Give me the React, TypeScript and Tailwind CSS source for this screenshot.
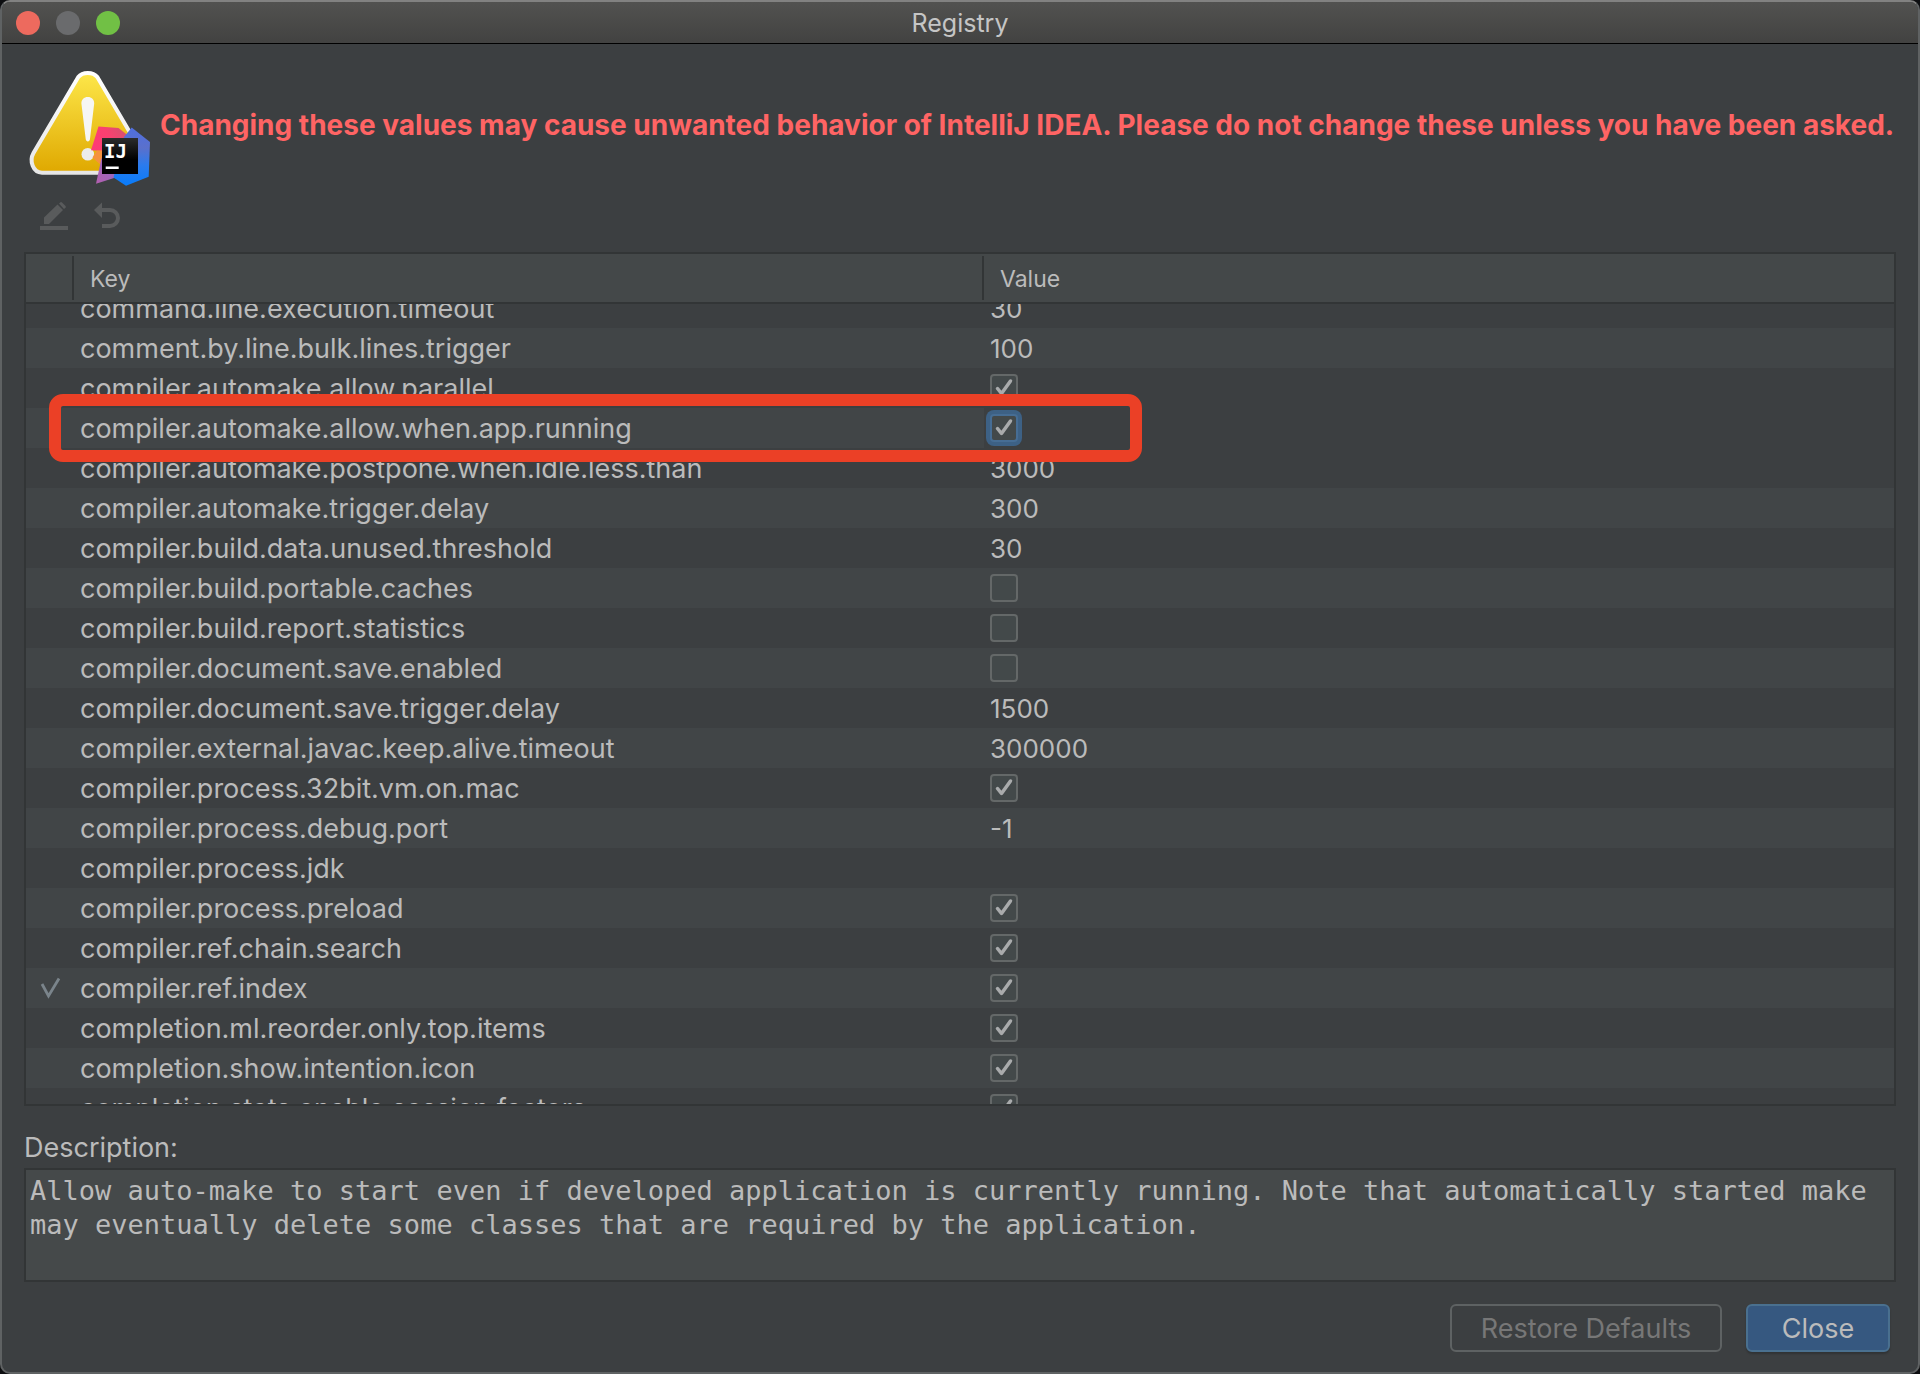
import { useLayoutEffect, useRef, useState } from 'react'
import clsx from 'clsx'

interface RegistryEntry {
  key: string
  value: string | boolean
  changed?: boolean
}

const INITIAL_ENTRIES: RegistryEntry[] = [
  { key: 'command.line.execution.timeout', value: '30' },
  { key: 'comment.by.line.bulk.lines.trigger', value: '100' },
  { key: 'compiler.automake.allow.parallel', value: true },
  { key: 'compiler.automake.allow.when.app.running', value: true },
  { key: 'compiler.automake.postpone.when.idle.less.than', value: '3000' },
  { key: 'compiler.automake.trigger.delay', value: '300' },
  { key: 'compiler.build.data.unused.threshold', value: '30' },
  { key: 'compiler.build.portable.caches', value: false },
  { key: 'compiler.build.report.statistics', value: false },
  { key: 'compiler.document.save.enabled', value: false },
  { key: 'compiler.document.save.trigger.delay', value: '1500' },
  { key: 'compiler.external.javac.keep.alive.timeout', value: '300000' },
  { key: 'compiler.process.32bit.vm.on.mac', value: true },
  { key: 'compiler.process.debug.port', value: '-1' },
  { key: 'compiler.process.jdk', value: '' },
  { key: 'compiler.process.preload', value: true },
  { key: 'compiler.ref.chain.search', value: true },
  { key: 'compiler.ref.index', value: true, changed: true },
  { key: 'completion.ml.reorder.only.top.items', value: true },
  { key: 'completion.show.intention.icon', value: true },
  { key: 'completion.stats.enable.session.factors', value: true },
]

const SELECTED_KEY = 'compiler.automake.allow.when.app.running'

const DESCRIPTION =
  'Allow auto-make to start even if developed application is currently running. Note that automatically started make may eventually delete some classes that are required by the application.'

function WarningIcon() {
  return (
    <svg viewBox="24 60 128 128" className="size-32 shrink-0" aria-hidden="true">
      <defs>
        <linearGradient id="warnFill" x1="0" y1="0" x2="0" y2="1">
          <stop offset="0" stopColor="#fde74a" />
          <stop offset="1" stopColor="#dfa800" />
        </linearGradient>
        <linearGradient id="warnEdge" x1="0" y1="0" x2="0" y2="1">
          <stop offset="0" stopColor="#ffffff" />
          <stop offset="1" stopColor="#e6e6e6" />
        </linearGradient>
        <linearGradient id="ijPink" x1="0" y1="1" x2="1" y2="0.6">
          <stop offset="0" stopColor="#fe3a78" />
          <stop offset="0.6" stopColor="#fb4070" />
          <stop offset="1" stopColor="#d9506f" />
        </linearGradient>
        <linearGradient id="ijBlue" x1="0" y1="0" x2="0" y2="1">
          <stop offset="0" stopColor="#4f6fe0" />
          <stop offset="0.35" stopColor="#5a70cc" />
          <stop offset="0.65" stopColor="#2a7bee" />
          <stop offset="1" stopColor="#087cfa" />
        </linearGradient>
        <linearGradient id="ijPurple" x1="0" y1="1" x2="1" y2="0">
          <stop offset="0" stopColor="#b45fae" />
          <stop offset="1" stopColor="#8f6bc4" />
        </linearGradient>
        <linearGradient id="ijBlack" x1="0" y1="0" x2="0" y2="1">
          <stop offset="0" stopColor="#2b2c2c" />
          <stop offset="0.6" stopColor="#000000" />
        </linearGradient>
      </defs>
      <path
        d="M78.3 77C82.5 71.5 93 71.5 97.3 77L142 153C146.500 161 143 172.700 133.500 172.700H42C33 172.700 29 161 33.500 153Z"
        fill="url(#warnFill)"
        stroke="url(#warnEdge)"
        strokeWidth="4"
        strokeLinejoin="round"
      />
      <path
        d="M81.400 103.500C81.400 99.500 84 97 87.800 97S94.300 99.500 94.200 103.500L90 139C89.700 142.200 86 142.200 85.700 139Z"
        fill="#f6f6f4"
      />
      <circle cx="87.800" cy="154.300" r="6.300" fill="#ececea" />
      <path d="M98.500 126.600L118.500 128L130 137L104 151L91 150.300Z" fill="url(#ijPink)" />
      <path d="M92.500 157.500L97 150.500H104V168Z" fill="#f5923e" />
      <path d="M101.500 158L116 172L114 178L96 183.700Z" fill="url(#ijPurple)" />
      <path d="M131.700 127.600L150 142L148.700 176.700L126 185.700L113.500 177.500L124 137Z" fill="url(#ijBlue)" />
      <rect x="102" y="138" width="36" height="36" fill="url(#ijBlack)" />
      <text
        x="104"
        y="158"
        fill="#ffffff"
        className="font-['DejaVu_Sans_Mono',monospace] text-[19px] font-bold"
      >
        IJ
      </text>
      <rect x="105.700" y="166.500" width="13" height="2.500" fill="#ffffff" />
    </svg>
  )
}

function EditIcon() {
  return (
    <svg viewBox="0 0 32 32" className="size-8" fill="#595b5c" aria-hidden="true">
      <path d="M6 17.500L19.500 4.500L25 10L11 24H6Z" />
      <path d="M21 3.500L22.500 2.200Q23.300 1.800 24 2.500L27.500 6Q28.200 7 27.500 7.800L26 9Z" />
      <path d="M2 26H30V30H2Z" />
    </svg>
  )
}

function RevertIcon() {
  return (
    <svg viewBox="0 0 32 32" className="size-8" aria-hidden="true">
      <path d="M4 10L12 2.500V18Z" fill="#595b5c" />
      <path d="M11 10H20A8 8 0 0 1 20 26H12" fill="none" stroke="#595b5c" strokeWidth="4" />
    </svg>
  )
}

interface CheckboxProps {
  label: string
  checked: boolean
  focused: boolean
  onChange: (checked: boolean) => void
}

function Checkbox({ label, checked, focused, onChange }: CheckboxProps) {
  return (
    <span className="relative block size-7">
      <input
        type="checkbox"
        aria-label={label}
        checked={checked}
        onChange={e => onChange(e.target.checked)}
        className={clsx(
          'block size-7 appearance-none rounded border-2 bg-[#43494a] outline-none',
          focused ? 'border-[#466d94] ring-4 ring-[#3d6185]' : 'border-[#646868]',
        )}
      />
      {checked && (
        <svg viewBox="0 0 28 28" className="pointer-events-none absolute inset-0 size-7" aria-hidden="true">
          <path
            d="M7.500 14.500L11.500 19.500L20.500 7"
            fill="none"
            stroke="#a9abac"
            strokeWidth="3.500"
            strokeLinecap="round"
            strokeLinejoin="round"
          />
        </svg>
      )}
    </span>
  )
}

function TitleBar() {
  return (
    <header className="relative flex h-[42px] shrink-0 items-center justify-center border-b border-black bg-linear-to-b from-[#525250] to-[#424241]">
      <div className="absolute left-3.5 flex gap-4">
        <button aria-label="Close window" className="size-6 rounded-full bg-[#ed6a5e]" />
        <button aria-label="Minimize window" disabled className="size-6 rounded-full bg-[#6a6b6d]" />
        <button aria-label="Zoom window" className="size-6 rounded-full bg-[#71c045]" />
      </div>
      <h1 className="pt-0.5 text-[25px] text-[#c5c5c5]">Registry</h1>
    </header>
  )
}

export default function App() {
  const [entries, setEntries] = useState(INITIAL_ENTRIES)
  const scrollRef = useRef<HTMLDivElement>(null)

  useLayoutEffect(() => {
    if (scrollRef.current) scrollRef.current.scrollTop = 16
  }, [])

  const updateEntry = (key: string, value: boolean) => {
    setEntries(prev => prev.map(e => (e.key === key ? { ...e, value } : e)))
  }

  return (
    <div className="h-screen bg-[#0d0e10] font-['Inter','Liberation_Sans',sans-serif] text-[#bbbbbb]">
      <div className="flex h-full flex-col overflow-hidden rounded-[10px] border-2 border-[#5f6263] border-t-[#828281] bg-[#3c3f41]">
        <TitleBar />

        <main className="flex min-h-0 flex-1 flex-col px-[22px] pt-4 pb-5">
          <div className="flex items-center gap-2">
            <WarningIcon />
            <p className="pt-0.5 text-[28px] font-bold whitespace-nowrap text-[#ff6464]">
              Changing these values may cause unwanted behavior of IntelliJ IDEA. Please do not change these unless
              you have been asked.
            </p>
          </div>

          <div className="mt-3 mb-5 flex gap-5 px-3.5">
            <button aria-label="Edit value" disabled>
              <EditIcon />
            </button>
            <button aria-label="Revert to default" disabled>
              <RevertIcon />
            </button>
          </div>

          {/* Registry keys */}
          <div ref={scrollRef} className="min-h-0 flex-1 overflow-y-auto border-2 border-[#323536] [scrollbar-width:none]">
            <table className="w-full table-fixed border-separate border-spacing-0 text-left leading-[38px]">
              <colgroup>
                <col className="w-12" />
                <col className="w-[910px]" />
                <col />
              </colgroup>
              <thead className="sticky top-0 z-10 bg-[#444849] text-[23px]">
                <tr className="h-[50px]">
                  <th aria-label="Changed" className="border-b-2 border-[#323536] p-0 py-0.5">
                    <div className="h-11 border-r-2 border-[#323536]" />
                  </th>
                  <th className="border-b-2 border-[#323536] p-0 py-0.5 font-normal">
                    <div className="flex h-11 items-center border-r-2 border-[#323536] pt-0.5 pl-4">Key</div>
                  </th>
                  <th className="border-b-2 border-[#323536] p-0 py-0.5 font-normal">
                    <div className="flex h-11 items-center pt-0.5 pl-4">Value</div>
                  </th>
                </tr>
              </thead>
              <tbody>
                {entries.map(entry => {
                  const selected = entry.key === SELECTED_KEY
                  return (
                    <tr key={entry.key} className="h-10 even:bg-[#414547]">
                      <td className="relative p-0">
                        {entry.changed && (
                          <svg viewBox="0 0 48 40" className="block h-10 w-12" aria-label="Changed">
                            <path d="M16 16L22.500 28L33 10.500" fill="none" stroke="#7a848b" strokeWidth="2.800" />
                          </svg>
                        )}
                        {selected && (
                          <div className="pointer-events-none absolute -top-3.5 left-[23px] z-[1] h-[68px] w-[1093px] rounded-[14px] border-12 border-[#eb4026]" />
                        )}
                      </td>
                      <td className="p-0 pt-0.5 pl-1.5 text-[27px] whitespace-nowrap">{entry.key}</td>
                      {typeof entry.value === 'boolean' ? (
                        <td className={clsx('p-0 pl-1.5', selected && 'bg-[#3c3f41]')}>
                          <Checkbox
                            label={entry.key}
                            checked={entry.value}
                            focused={selected}
                            onChange={checked => updateEntry(entry.key, checked)}
                          />
                        </td>
                      ) : (
                        <td className="p-0 pt-0.5 pl-1.5 text-[26px]">{entry.value}</td>
                      )}
                    </tr>
                  )
                })}
              </tbody>
            </table>
          </div>

          <label htmlFor="description" className="pt-[26px] pb-1 text-[27px] leading-8">
            Description:
          </label>
          <textarea
            id="description"
            readOnly
            value={DESCRIPTION}
            className="h-[114px] shrink-0 resize-none border-2 border-[#323536] bg-[#45494a] px-1 py-1 font-['DejaVu_Sans_Mono',monospace] text-[27px] leading-[34px] outline-none"
          />

          <div className="mt-[22px] flex justify-end gap-6 px-1.5 text-[27px]">
            <button
              disabled
              className="flex h-12 w-[272px] items-center justify-center rounded-md border-2 border-[#5e6263] pt-0.5 text-[#777777]"
            >
              Restore Defaults
            </button>
            <button className="flex h-12 w-36 items-center justify-center rounded-md border-2 border-[#4a708f] bg-[#365880] pt-0.5 shadow-[0_2px_2px_rgba(0,0,0,0.2)]">
              Close
            </button>
          </div>
        </main>
      </div>
    </div>
  )
}
